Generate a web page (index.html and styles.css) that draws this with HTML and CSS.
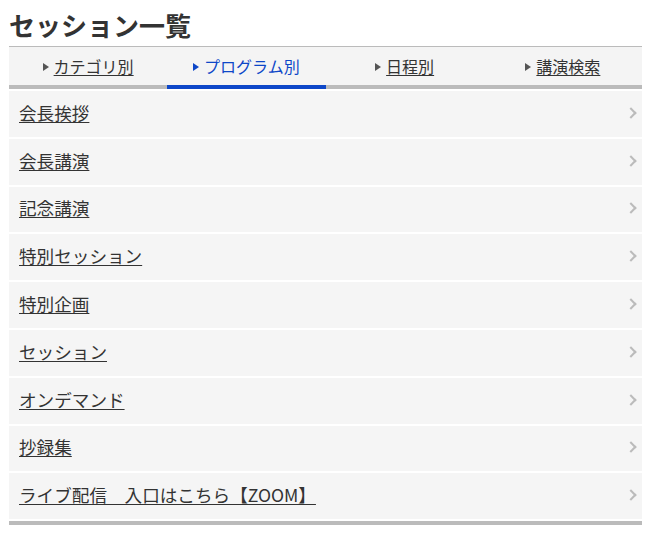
FILE: index.html
```html
<!DOCTYPE html>
<html lang="ja">
<head>
<meta charset="utf-8">
<title>セッション一覧</title>
<link rel="stylesheet" href="styles.css">
</head>
<body>
<div class="page">
  <h1 class="title">セッション一覧</h1>
  <nav class="tabs">
    <a class="tab" href="#"><span class="tri"></span><span class="tab-label">カテゴリ別</span></a>
    <a class="tab active" href="#"><span class="tri"></span><span class="tab-label">プログラム別</span></a>
    <a class="tab" href="#"><span class="tri"></span><span class="tab-label">日程別</span></a>
    <a class="tab" href="#"><span class="tri"></span><span class="tab-label">講演検索</span></a>
  </nav>
  <ul class="list">
    <li class="item"><a href="#">会長挨拶</a><span class="chev"></span></li>
    <li class="item"><a href="#">会長講演</a><span class="chev"></span></li>
    <li class="item"><a href="#">記念講演</a><span class="chev"></span></li>
    <li class="item"><a href="#">特別セッション</a><span class="chev"></span></li>
    <li class="item"><a href="#">特別企画</a><span class="chev"></span></li>
    <li class="item"><a href="#">セッション</a><span class="chev"></span></li>
    <li class="item"><a href="#">オンデマンド</a><span class="chev"></span></li>
    <li class="item"><a href="#">抄録集</a><span class="chev"></span></li>
    <li class="item"><a href="#">ライブ配信　入口はこちら【ZOOM】</a><span class="chev"></span></li>
  </ul>
</div>
</body>
</html>
```

FILE: styles.css
```css
html, body {
  margin: 0;
  padding: 0;
  background: #fff;
}
body {
  font-family: "Noto Sans CJK JP", "Noto Sans", sans-serif;
  color: #333;
}
.page {
  width: 633px;
  margin-left: 9px;
  padding-top: 7px;
}
.title {
  margin: 0;
  font-size: 26px;
  font-weight: bold;
  line-height: 36px;
  height: 39px;
  color: #333;
}
.tabs {
  display: grid;
  grid-template-columns: repeat(4, 1fr);
  border-top: 1px solid #bbb;
  background: #f4f4f4;
}
.tab {
  display: flex;
  align-items: center;
  justify-content: center;
  height: 38px;
  border-bottom: 4px solid #bbb;
  color: #333;
  text-decoration: none;
  font-size: 16px;
}
.tab-label {
  text-decoration: underline;
  text-underline-offset: 2px;
  line-height: 20px;
}
.tri {
  width: 0;
  height: 0;
  border-top: 4px solid transparent;
  border-bottom: 4px solid transparent;
  border-left: 6px solid #555;
  margin-right: 5px;
  margin-top: 2px;
}
.tab.active {
  color: #0d47c8;
  border-bottom-color: #0d47c8;
}
.tab.active .tab-label {
  text-decoration: none;
}
.tab.active .tri {
  border-left-color: #0d47c8;
}
.list {
  list-style: none;
  margin: 0;
  padding: 2px 0 2px;
  border-bottom: 4px solid #bbb;
}
.item {
  display: flex;
  align-items: center;
  justify-content: space-between;
  box-sizing: border-box;
  height: 45.8px;
  background: #f5f5f5;
  padding: 0 7px 2px 10px;
  margin-bottom: 2px;
}
.item:last-child {
  margin-bottom: 0;
}
.item a {
  color: #333;
  font-size: 17.6px;
  text-decoration: underline;
  text-underline-offset: 2px;
  line-height: 22px;
}
.chev {
  width: 6px;
  height: 6px;
  border-top: 2px solid #bbb;
  border-right: 2px solid #bbb;
  transform: rotate(45deg);
}
```
